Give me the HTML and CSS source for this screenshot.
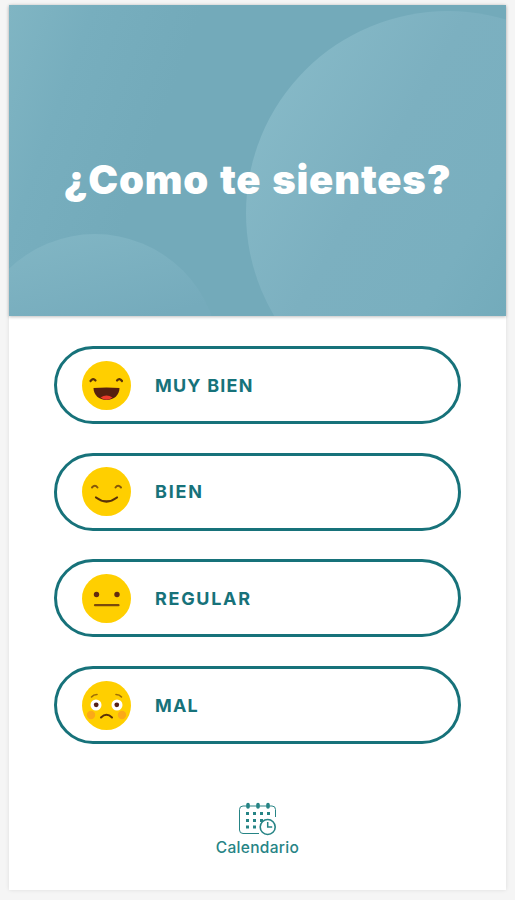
FILE: index.html
```html
<!DOCTYPE html>
<html lang="es">
<head>
    <meta charset="UTF-8">
    <meta name="viewport" content="width=device-width, initial-scale=1.0">
    <title>¿Como te sientes?</title>
    <link rel="stylesheet" href="styles.css">
</head>
<body>
    <main class="screen">
        <header class="hero">
            <h1 class="title">¿Como te sientes?</h1>
        </header>

        <div class="moods">
            <button class="mood">
                <svg class="face" viewBox="0 0 49 49">
                    <circle cx="24.5" cy="24.5" r="24.5" fill="#ffcf00"/>
                    <path d="M8.500 20q2.500-3.500 5-.5M35 19.500q2.500-3 5 .5" fill="none" stroke="#5a3209" stroke-width="2.200" stroke-linecap="round"/>
                    <path d="M11.500 27q13-1 26 0c0 7-5.500 12-13 12s-13-5-13-12z" fill="#56200f"/>
                    <path d="M18.500 36.500q6-4 12 0-6 4.500-12 0z" fill="#ec3b2b"/>
                </svg>
                <span class="label">MUY BIEN</span>
            </button>
            <button class="mood">
                <svg class="face" viewBox="0 0 49 49">
                    <circle cx="24.5" cy="24.5" r="24.5" fill="#ffcf00"/>
                    <path d="M10 20.500q3-3.500 5.500 0M33.500 20.500q2.500-3.500 5.500 0" fill="none" stroke="#85580a" stroke-width="2" stroke-linecap="round"/>
                    <path d="M14 30.500q10.500 8 21 0" fill="none" stroke="#5a3209" stroke-width="2.200" stroke-linecap="round"/>
                </svg>
                <span class="label bien">BIEN</span>
            </button>
            <button class="mood">
                <svg class="face" viewBox="0 0 49 49">
                    <circle cx="24.5" cy="24.5" r="24.5" fill="#ffcf00"/>
                    <circle cx="14.5" cy="20.5" r="2.7" fill="#632c10"/>
                    <circle cx="35" cy="20.5" r="2.7" fill="#632c10"/>
                    <path d="M13 31.200h23.500" stroke="#7a4a0c" stroke-width="2.200" stroke-linecap="round"/>
                </svg>
                <span class="label regular">REGULAR</span>
            </button>
            <button class="mood">
                <svg class="face" viewBox="0 0 49 49">
                    <circle cx="24.5" cy="24.5" r="24.5" fill="#ffcf00"/>
                    <circle cx="9" cy="34" r="4.2" fill="#fba918"/>
                    <circle cx="40" cy="34" r="4.2" fill="#fba918"/>
                    <circle cx="14" cy="24" r="5.5" fill="#fff"/>
                    <circle cx="35" cy="24" r="5.5" fill="#fff"/>
                    <circle cx="14.2" cy="23.8" r="2.4" fill="#552019"/>
                    <circle cx="34.8" cy="23.8" r="2.4" fill="#552019"/>
                    <path d="M9.500 16q2-2.500 5.500-2.500M34 13.500q3.500 0 5.500 2.500" fill="none" stroke="#9b6c08" stroke-width="1.600" stroke-linecap="round"/>
                    <path d="M19 36.500q5.500-5.500 11 0" fill="none" stroke="#5a3209" stroke-width="2" stroke-linecap="round"/>
                </svg>
                <span class="label">MAL</span>
            </button>
        </div>

        <a class="calendar" href="#">
            <svg class="calendar-icon" viewBox="0 0 38 34" fill="none" stroke="#268485">
                <path d="M21 31.500H5a3.500 3.500 0 0 1-3.500-3.500V7.500A3.500 3.500 0 0 1 5 4h29a3.500 3.500 0 0 1 3.500 3.500V15" stroke-width="1"/>
                <path d="M10 2.500v2.500M20 2.500v2.500M30 2.500v2.500" stroke-width="3.600" stroke-linecap="round"/>
                <path d="M8 11.500h3m4 0h3m4 0h3m4 0h3M8 18.500h3m4 0h3m4 0h3M8 25h3m4 0h3" stroke-width="3.200"/>
                <circle cx="29.7" cy="25" r="7.5" fill="#fff" stroke-width="1.6"/>
                <path d="M29.700 20v5h4.500" stroke-width="1.500"/>
            </svg>
            <span>Calendario</span>
        </a>
    </main>
</body>
</html>
```
FILE: styles.css
```css
:root {
    --teal: #17727a;
    --page-bg: #f5f5f5;
    --hero-bg: #73aaba;
}

* {
    box-sizing: border-box;
}
body {
    margin: 0;
    height: 900px;
    padding: 5px 9px 10px;
    overflow: hidden;
    background-color: var(--page-bg);
    font-family: Inter, "Open Sans", sans-serif;
}
.screen {
    display: flex;
    flex-direction: column;
    align-items: center;
    height: 885px;
    background-color: #fff;
    box-shadow: 0 0 4px rgba(0, 0, 0, 0.1);
}
.hero {
    display: flex;
    justify-content: center;
    width: 100%;
    height: 311px;
    padding-top: 151px;
    background: linear-gradient(110deg, #80b5c3, #77aebe 14%, var(--hero-bg) 32%);
    position: relative;
    overflow: hidden;
    box-shadow: 0 1px 3px rgba(0, 0, 0, 0.25);
}
.title {
    z-index: 1;
    margin: 0;
    color: #fff;
    font-size: 40px;
    font-weight: 900;
    line-height: 48px;
    letter-spacing: 0.8px;
    word-spacing: 2px;
    white-space: nowrap;
}
.moods {
    display: flex;
    flex-direction: column;
    gap: 28.7px;
    width: 407px;
    margin-top: 30px;
}
.mood {
    display: flex;
    align-items: center;
    gap: 24px;
    height: 78px;
    padding: 0 25px;
    border: 3px solid var(--teal);
    border-radius: 39px;
    background-color: #fff;
    color: var(--teal);
    font-family: inherit;
}
.face {
    width: 49px;
    height: 49px;
}
.label {
    font-size: 18px;
    font-weight: 700;
    letter-spacing: 1.2px;
}
.label.bien {
    letter-spacing: 1.8px;
}
.label.regular {
    letter-spacing: 1.7px;
}
.calendar {
    display: flex;
    flex-direction: column;
    align-items: center;
    gap: 1px;
    margin-top: 58px;
    color: #268485;
    font-size: 15.5px;
    font-weight: 500;
    line-height: 22px;
    letter-spacing: 0.3px;
    text-decoration: none;
}
.calendar-icon {
    width: 38px;
    height: 34px;
}

/* soft circles behind the title */
.hero::before,
.hero::after {
    content: "";
    position: absolute;
    border-radius: 50%;
}
.hero::before {
    top: 6px;
    left: 237px;
    width: 404px;
    height: 404px;
    background: linear-gradient(120deg, #86b9c7 10%, #7cb0c0 35%, #79afbf 55%, #70a9b9 75%);
}
.hero::after {
    top: 229px;
    left: -38px;
    width: 248px;
    height: 248px;
    background: linear-gradient(165deg, #83b7c5, #75abbc 42%);
}
```
